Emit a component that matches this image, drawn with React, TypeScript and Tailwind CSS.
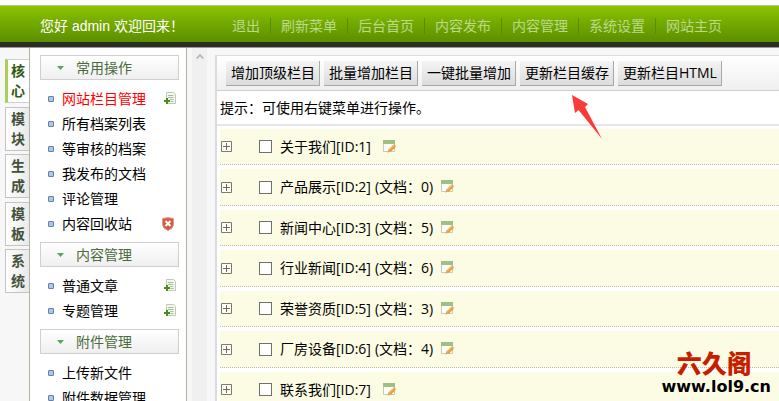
import type { ReactNode } from "react";

// ─── Types ────────────────────────────────────────────────────────────────────
interface MenuItem {
  label: string;
  active?: boolean;
  action?: "add" | "recycle";
}

interface MenuGroup {
  title: string;
  items: MenuItem[];
}

interface Column {
  id: number;
  name: string;
  docs?: number;
}

// ─── Data ─────────────────────────────────────────────────────────────────────
const topLinks = ["退出", "刷新菜单", "后台首页", "内容发布", "内容管理", "系统设置", "网站主页"];

const tabs = ["核心", "模块", "生成", "模板", "系统"];

const menuGroups: MenuGroup[] = [
  {
    title: "常用操作",
    items: [
      { label: "网站栏目管理", active: true, action: "add" },
      { label: "所有档案列表" },
      { label: "等审核的档案" },
      { label: "我发布的文档" },
      { label: "评论管理" },
      { label: "内容回收站", action: "recycle" },
    ],
  },
  {
    title: "内容管理",
    items: [
      { label: "普通文章", action: "add" },
      { label: "专题管理", action: "add" },
    ],
  },
  {
    title: "附件管理",
    items: [{ label: "上传新文件" }, { label: "附件数据管理" }],
  },
];

const toolbar = ["增加顶级栏目", "批量增加栏目", "一键批量增加", "更新栏目缓存", "更新栏目HTML"];

const columns: Column[] = [
  { id: 1, name: "关于我们" },
  { id: 2, name: "产品展示", docs: 0 },
  { id: 3, name: "新闻中心", docs: 5 },
  { id: 4, name: "行业新闻", docs: 6 },
  { id: 5, name: "荣誉资质", docs: 3 },
  { id: 6, name: "厂房设备", docs: 4 },
  { id: 7, name: "联系我们" },
];

// ─── Icons ────────────────────────────────────────────────────────────────────
function AddIcon() {
  return (
    <svg width="12" height="13" viewBox="0 0 12 13" fill="none">
      <path d="M2.5.5h7l2 2v9h-9z" fill="#f3f8f0" stroke="#bccbb6" />
      <path d="M4 3.500h5.500M4 5.500h5.500M6 7.500h3.500M6.500 9.500h3" stroke="#a9bca2" />
      <path d="M3 6v6M0 9h6" stroke="#4d8a1c" strokeWidth="2" />
    </svg>
  );
}

function RecycleIcon() {
  return (
    <svg width="12" height="14" viewBox="0 0 12 14" fill="none" className="mr-[2px]">
      <path
        d="M.7 1.500Q6 0 11.300 1.500V8q0 3-5.300 5.500Q.7 11 .7 8z"
        fill="#d9553f"
        stroke="#cf8f83"
      />
      <path d="M3.500 4l5 5M8.500 4l-5 5" stroke="#fff" strokeWidth="2" />
    </svg>
  );
}

function EditIcon() {
  return (
    <svg width="13" height="14" viewBox="0 0 13 14" fill="none">
      <path d="M.5.5h11v11H.5z" fill="#fdfefa" stroke="#c3ceb2" />
      <path d="M0 0h12v4H0z" fill="#9dc184" />
      <path d="M4.500 12.500l1-3.200L10 5l2.400 2-4.700 4.700z" fill="#f3b84a" />
      <path d="M6.600 10.600l4.600-4.500 1.200 1-4.700 4.600z" fill="#e89a3c" />
      <path d="M10 5l1-1 2 2-.7 1z" fill="#e69a7a" />
      <path d="M4.500 12.500l1-3 2 2z" fill="#c9a98a" />
    </svg>
  );
}

function PlusBox() {
  return (
    <svg width="11" height="11" viewBox="0 0 11 11" fill="none">
      <path d="M.5.5h10v10H.5z" fill="#fffff4" stroke="#7b7b76" />
      <path d="M5.500 2v7M2 5.500h7" stroke="#6b6b66" />
    </svg>
  );
}

// ─── Pieces ───────────────────────────────────────────────────────────────────
function ToolButton({ children }: { children: ReactNode }) {
  return (
    <button
      type="button"
      className="h-[25px] shrink-0 border-r border-b border-[#a8a8a8] bg-linear-to-b from-[#f4f4f4] to-[#dcdcdc] pr-1 pl-[5px] whitespace-nowrap text-black"
    >
      {children}
    </button>
  );
}

function TopBar() {
  return (
    <header className="mt-[5px] flex h-[42px] shrink-0 items-center border-t border-b-[5px] border-t-[#b5c98c] border-b-[#2b2e22] bg-linear-to-b from-[#8cc400] via-[#72a800] to-[#5c8f00] pt-[3px] pl-10">
      <p className="w-[182px] shrink-0 font-['Liberation_Sans','Noto_Sans_CJK_SC',sans-serif] whitespace-nowrap text-white">
        您好 admin 欢迎回来！
      </p>
      <nav className="flex">
        {topLinks.map((label) => (
          <a
            key={label}
            href="#"
            className="border-r border-[#5a8c00] px-[10px] leading-4 whitespace-nowrap text-[#bcd98a] last:border-r-0"
          >
            {label}
          </a>
        ))}
      </nav>
    </header>
  );
}

function Tabs() {
  return (
    <div className="w-[29px] shrink-0 pt-[11px] pl-[5px]">
      <div className="flex h-[234px] flex-col justify-between">
        {tabs.map((label, i) => (
          <button
            key={label}
            type="button"
            className={
              i === 0
                ? "h-11 border border-r-0 border-l-[3px] border-[#cfcfcf] border-l-[#a9cf5b] bg-white pl-[3px] text-left font-bold leading-5 text-[#2f5a10]"
                : "h-11 border border-r-0 border-[#c4c4c4] bg-linear-to-r from-white to-[#e9e9e9] pl-[5px] text-left font-bold leading-5 text-[#44523c]"
            }
          >
            <span className="block w-[14px] break-all">{label}</span>
          </button>
        ))}
      </div>
    </div>
  );
}

function SideMenu() {
  return (
    <aside className="w-[158px] shrink-0 overflow-hidden border-x border-[#b3b5a2] bg-white pt-[7px] pr-[7px] pl-[10px]">
      {menuGroups.map((group) => (
        <section key={group.title}>
          <h2 className="flex h-[25px] items-center border border-[#d0d0d0] bg-linear-to-b from-white to-[#efefef] pl-4 text-[#4c6b3c]">
            <svg width="7" height="4" viewBox="0 0 7 4" className="mr-3">
              <path d="M0 0h7L3.500 4z" fill="#5fa35a" />
            </svg>
            {group.title}
          </h2>
          <ul className="py-[6px]">
            {group.items.map((item) => (
              <li key={item.label} className="flex h-[25px] items-center pr-[3px] pl-2">
                <span className="mr-2 size-[6px] shrink-0 rounded-[1px] border border-[#6b7f9e] bg-[#a9c8f0]" />
                <a
                  href="#"
                  className={
                    item.active
                      ? "flex-1 whitespace-nowrap text-[#ff0000]"
                      : "flex-1 whitespace-nowrap text-black"
                  }
                >
                  {item.label}
                </a>
                {item.action === "add" && <AddIcon />}
                {item.action === "recycle" && <RecycleIcon />}
              </li>
            ))}
          </ul>
        </section>
      ))}
    </aside>
  );
}

function ColumnRow({ column }: { column: Column }) {
  const inputId = `column-${column.id}`;

  return (
    <li className="flex items-center border-b border-dotted border-[#bcbcac] bg-[#fcfce4] pl-px odd:h-9 even:h-[37px]">
      <button type="button" aria-label={`展开 ${column.name}`} className="mr-[27px]">
        <PlusBox />
      </button>
      <input
        id={inputId}
        type="checkbox"
        className="mr-2 size-[13px] appearance-none border border-[#707070] bg-white checked:bg-[#5c8f00]"
      />
      <label htmlFor={inputId} className="whitespace-nowrap">
        {column.name}[ID:{column.id}]
      </label>
      {column.docs === undefined ? (
        <span className="w-3" />
      ) : (
        <span className="mr-2 ml-1 whitespace-nowrap">(文档：{column.docs})</span>
      )}
      <a href="#" aria-label={`编辑 ${column.name}`}>
        <EditIcon />
      </a>
    </li>
  );
}

// ─── Page ─────────────────────────────────────────────────────────────────────
export default function App() {
  return (
    <div className="relative flex h-screen flex-col overflow-hidden bg-white font-['Open_Sans','Noto_Sans_CJK_SC',sans-serif] text-sm text-black">
      <TopBar />

      <div className="flex min-h-0 flex-1 border-t border-[#9a9a9a] bg-[#f7f7f7]">
        <Tabs />
        <SideMenu />

        {/* Scroll track of the menu frame */}
        <div className="ml-[5px] flex w-[15px] shrink-0 justify-center bg-[#f0f0f0] pt-[6px]">
          <svg width="8" height="5" viewBox="0 0 8 5" fill="none">
            <path d="M.7 4.500L4 1l3.300 3.500" stroke="#b0b0b0" strokeWidth="1.500" />
          </svg>
        </div>

        <main className="mt-[7px] ml-2 min-w-0 flex-1 overflow-hidden border-t border-l-2 border-[#dcdcdc] bg-white">
          <div className="flex h-[35px] items-center gap-1 border-b border-[#cfcfcf] bg-linear-to-b from-white to-[#efefef] pl-[9px]">
            {toolbar.map((label) => (
              <ToolButton key={label}>{label}</ToolButton>
            ))}
          </div>
          <p className="flex h-[35px] items-center border-b-2 border-[#e6e6e6] pl-[3px]">
            提示：可使用右键菜单进行操作。
          </p>
          <ul className="flex flex-col gap-1 pt-[3px] pl-[3px]">
            {columns.map((column) => (
              <ColumnRow key={column.id} column={column} />
            ))}
          </ul>
        </main>
      </div>

      {/* Pointer to the cache button */}
      <svg
        width="30"
        height="44"
        viewBox="0 0 30 44"
        className="absolute top-[95px] left-[572px]"
      >
        <path d="M0 0l16 9-3 3 17 32L6.500 15 3 18z" fill="#fc3a38" />
      </svg>

      {/* Site mark */}
      <div className="absolute right-2 bottom-1 flex flex-col items-center">
        <span className="pr-1 font-['Noto_Sans_CJK_SC',sans-serif] text-[25px] leading-[30px] font-black text-[#c81e00]">
          六久阁
        </span>
        <span className="font-['DejaVu_Sans',sans-serif] text-base leading-5 font-bold">
          www.lol9.cn
        </span>
      </div>
    </div>
  );
}
